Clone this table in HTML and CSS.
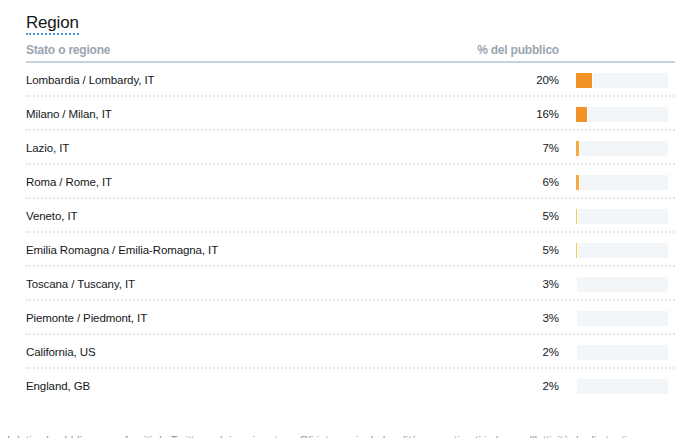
FILE: index.html
```html
<!DOCTYPE html>
<html lang="it">
<head>
<meta charset="utf-8">
<title>Region</title>
<link rel="stylesheet" href="styles.css">
</head>
<body>
<div class="page">
  <section class="panel">
    <h2 class="title"><span class="title-text">Region</span></h2>
    <div class="table">
      <div class="row head">
        <div class="c-name">Stato o regione</div>
        <div class="c-pct">% del pubblico</div>
        <div class="c-bar"></div>
      </div>
      <div class="row">
        <div class="c-name">Lombardia / Lombardy, IT</div>
        <div class="c-pct">20%</div>
        <div class="c-bar"><div class="bar"><span class="fill hi" style="width:17px"></span></div></div>
      </div>
      <div class="row">
        <div class="c-name">Milano / Milan, IT</div>
        <div class="c-pct">16%</div>
        <div class="c-bar"><div class="bar"><span class="fill hi" style="width:12px"></span></div></div>
      </div>
      <div class="row">
        <div class="c-name">Lazio, IT</div>
        <div class="c-pct">7%</div>
        <div class="c-bar"><div class="bar"><span class="fill mid" style="width:4px"></span></div></div>
      </div>
      <div class="row">
        <div class="c-name">Roma / Rome, IT</div>
        <div class="c-pct">6%</div>
        <div class="c-bar"><div class="bar"><span class="fill mid" style="width:4px"></span></div></div>
      </div>
      <div class="row">
        <div class="c-name">Veneto, IT</div>
        <div class="c-pct">5%</div>
        <div class="c-bar"><div class="bar"><span class="fill lo" style="width:2px"></span></div></div>
      </div>
      <div class="row">
        <div class="c-name">Emilia Romagna / Emilia-Romagna, IT</div>
        <div class="c-pct">5%</div>
        <div class="c-bar"><div class="bar"><span class="fill lo" style="width:2px"></span></div></div>
      </div>
      <div class="row">
        <div class="c-name">Toscana / Tuscany, IT</div>
        <div class="c-pct">3%</div>
        <div class="c-bar"><div class="bar"><span class="fill lo" style="width:0px"></span></div></div>
      </div>
      <div class="row">
        <div class="c-name">Piemonte / Piedmont, IT</div>
        <div class="c-pct">3%</div>
        <div class="c-bar"><div class="bar"><span class="fill lo" style="width:0px"></span></div></div>
      </div>
      <div class="row">
        <div class="c-name">California, US</div>
        <div class="c-pct">2%</div>
        <div class="c-bar"><div class="bar"><span class="fill lo" style="width:0px"></span></div></div>
      </div>
      <div class="row last">
        <div class="c-name">England, GB</div>
        <div class="c-pct">2%</div>
        <div class="c-bar"><div class="bar"><span class="fill lo" style="width:0px"></span></div></div>
      </div>
    </div>
  </section>
  <p class="note">I dati sul pubblico sono forniti da Twitter e dai suoi partner. Gli interessi e le località sono stimati in base all'attività degli utenti.</p>
</div>
</body>
</html>
```
FILE: styles.css
```css
* { box-sizing: border-box; }
html, body { margin: 0; padding: 0; background: #fff; }
body {
  font-family: "Liberation Sans", Arial, sans-serif;
  color: #14171a;
  font-size: 11.5px;
  letter-spacing: -0.1px;
}
.page { padding: 0 0 0 7px; }
.panel { margin-left: 19px; width: 649px; }
.title {
  margin: 13px 0 0 0;
  font-size: 17px;
  line-height: 20px;
  font-weight: normal;
  letter-spacing: -0.2px;
  color: #14171a;
}
.title-text {
  display: inline-block;
  border-bottom: 2px dotted #4a9ae6;
}
.table { margin-top: 5px; }
.row {
  display: grid;
  grid-template-columns: 1fr auto 92px;
  column-gap: 17px;
  padding: 9px 7px 7px 0;
  line-height: 16px;
  border-bottom: 2px dotted #e1e8ed;
}
.row.last { border-bottom: none; }
.row.head {
  padding: 2px 7px 3px 0;
  border-bottom: 2px solid #c8d2da;
  color: #9aa5af;
  font-weight: bold;
  font-size: 12px;
  letter-spacing: -0.2px;
}
.c-pct { text-align: right; }
.c-bar { padding-top: 1px; }
.bar {
  display: flex;
  height: 15px;
  background: #f3f6f9;
}
.fill {
  display: block;
  height: 15px;
  border-right: 1px solid #fff;
  flex: none;
}
.fill.hi { background: #f29327; }
.fill.mid { background: #f9a93f; }
.fill.lo { background: #fcc64c; }
.note {
  margin: 31px 0 0 0;
  line-height: 16px;
  color: #8a96a0;
  white-space: nowrap;
}
```
